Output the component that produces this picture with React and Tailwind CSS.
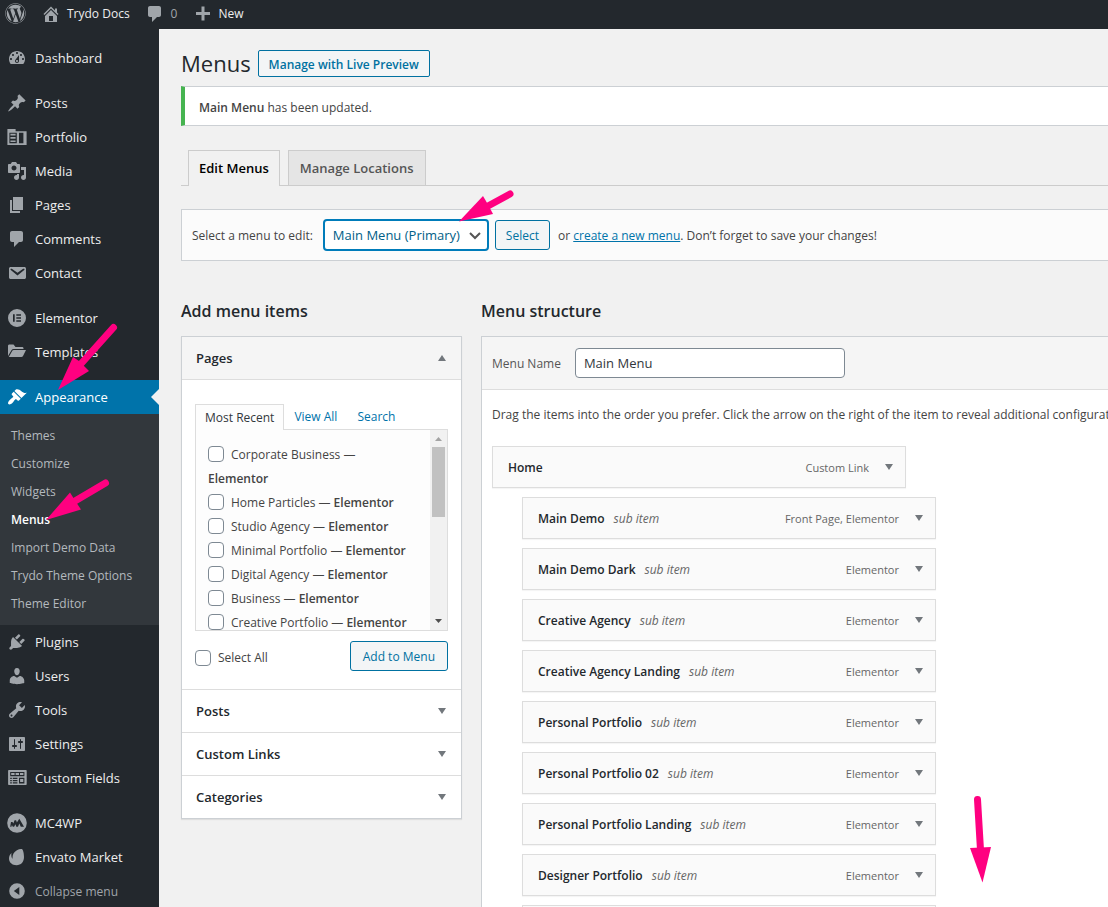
import React from "react";
import { FaWordpress } from "react-icons/fa";

const ICONS = {
  dashboard:
    "M3.76 16h12.48c1.1-1.37 1.76-3.11 1.76-5 0-4.42-3.58-8-8-8s-8 3.58-8 8c0 1.89.66 3.63 1.76 5zM10 4c.55 0 1 .45 1 1s-.45 1-1 1-1-.45-1-1 .45-1 1-1zM6 6c.55 0 1 .45 1 1s-.45 1-1 1-1-.45-1-1 .45-1 1-1zm8 0c.55 0 1 .45 1 1s-.45 1-1 1-1-.45-1-1 .45-1 1-1zm-5.37 5.55L12 7v6c0 1.1-.9 2-2 2s-2-.9-2-2c0-.57.24-1.08.63-1.45zM4 10c.55 0 1 .45 1 1s-.45 1-1 1-1-.45-1-1 .45-1 1-1zm12 0c.55 0 1 .45 1 1s-.45 1-1 1-1-.45-1-1 .45-1 1-1zm-5 3c0-.55-.45-1-1-1s-1 .45-1 1 .45 1 1 1 1-.45 1-1z",
  pin: "M10.44 3.02l1.82-1.82 6.36 6.35-1.83 1.82c-1.05-.68-2.48-.57-3.41.36l-.75.75c-.92.93-1.04 2.35-.35 3.41l-1.83 1.82-2.41-2.41-2.8 2.79c-.42.42-3.38 2.71-3.8 2.29s1.86-3.39 2.28-3.81l2.79-2.79L4.1 9.36l1.83-1.82c1.05.69 2.48.57 3.4-.36l.75-.75c.93-.92 1.05-2.35.36-3.41z",
  portfolio:
    "M.4 2H8.600v2.200h11v13.800H.4V2zM2.400 5.800v10.400H9.800V5.800H2.400zM12 5.800v10.400h4.400V5.800H12zM3.400 6.800h5.200v1.700H3.400V6.800zm0 3.300h5.200v1.700H3.400v-1.700zm0 3.300h5.200v1.700H3.400v-1.700z",
  media:
    "M13 11V4c0-.55-.45-1-1-1h-1.67L9 1H5L3.67 3H2c-.55 0-1 .45-1 1v7c0 .55.45 1 1 1h10c.55 0 1-.45 1-1zM7 4.5c1.38 0 2.5 1.12 2.5 2.5S8.38 9.5 7 9.5 4.5 8.38 4.5 7 5.62 4.5 7 4.5zM14 6h5v10.5c0 1.38-1.12 2.5-2.5 2.5S14 17.88 14 16.5s1.12-2.5 2.5-2.5c.17 0 .34.02.5.05V9h-3V6zm-4 8.05V13h2v3.5c0 1.38-1.12 2.5-2.5 2.5S7 17.88 7 16.5 8.12 14 9.5 14c.17 0 .34.02.5.05z",
  page: "M6 15V2h10v13H6zm-1 1h8v2H3V5h2v11z",
  comment:
    "M5 2h9c1.1 0 2 .9 2 2v7c0 1.1-.9 2-2 2h-2l-5 5v-5H5c-1.1 0-2-.9-2-2V4c0-1.1.9-2 2-2z",
  email:
    "M3.87 4h13.25C18.37 4 19 4.59 19 5.79v8.42c0 1.19-.63 1.79-1.88 1.79H3.87c-1.25 0-1.88-.6-1.88-1.79V5.79c0-1.2.63-1.79 1.88-1.79zm6.62 8.6l6.74-5.53c.24-.2.43-.66.13-1.07-.29-.41-.82-.42-1.17-.17l-5.7 3.86L4.8 5.83c-.35-.25-.88-.24-1.17.17-.3.41-.11.87.13 1.07z",
  elementor:
    "M10 1a9 9 0 1 0 0 18 9 9 0 0 0 0-18zM6 6.200h1.700v7.600H6V6.200zm3.300 0H14v1.600H9.300V6.200zm0 3H14v1.600H9.300V9.200zm0 3H14v1.600H9.300v-1.600z",
  folder:
    "M1 4c0-1 .6-1.500 1.500-1.500h4L8.500 5H15c1 0 1.500.5 1.500 1.500V7H6.500c-.8 0-1.500.4-1.900 1.100L1 14V4zm5.800 4H19l-3 6c-.3.700-.9 1-1.600 1H1.800l3.500-6.200c.3-.5.900-.8 1.500-.8z",
  brush:
    "M14.48 11.06L7.41 3.99l1.5-1.5c.5-.56 2.3-.47 3.51.32 1.21.8 1.43 1.28 2.91 2.1 1.18.64 2.45 1.26 4.45.85zm-.71.71L6.7 4.7 4.93 6.47c-.39.39-.39 1.02 0 1.41l1.06 1.06c.39.39.39 1.03 0 1.42-.6.6-1.43 1.11-2.21 1.69-.35.26-.7.53-1.01.84C1.43 14.23.4 16.08 1.4 17.07c.99 1 2.84-.03 4.18-1.36.31-.31.58-.66.85-1.02.57-.78 1.08-1.61 1.69-2.21.39-.39 1.02-.39 1.41 0l1.06 1.06c.39.39 1.02.39 1.41 0z",
  plugin:
    "M13.11 4.36L9.87 7.6 8 5.73l3.24-3.24c.35-.34 1.05-.2 1.56.32.52.51.66 1.21.31 1.55zm-8 1.77l.91-1.12 9.01 9.01-1.19.84c-.71.71-2.63 1.16-3.82 1.16H6.14L4.9 17.26c-.59.59-1.54.59-2.12 0-.59-.58-.59-1.53 0-2.12l1.24-1.24v-3.88c0-1.13.4-3.19 1.09-3.89zm7.26 3.97l3.24-3.24c.34-.35 1.04-.21 1.55.31.52.51.66 1.21.31 1.55l-3.24 3.25z",
  user: "M10 9.25c-2.27 0-2.73-3.44-2.73-3.44C7 4.02 7.82 2 9.97 2c2.16 0 2.98 2.02 2.71 3.81 0 0-.41 3.44-2.68 3.44zm0 2.57L12.72 10c2.39 0 4.52 2.33 4.52 4.53v2.49s-3.65 1.13-7.24 1.13c-3.65 0-7.24-1.13-7.24-1.13v-2.49c0-2.25 1.94-4.48 4.47-4.48z",
  wrench:
    "M16.68 9.77c-1.34 1.34-3.3 1.67-4.95.99l-5.41 6.52c-.99.99-2.59.99-3.58 0s-.99-2.59 0-3.57l6.52-5.42c-.68-1.65-.35-3.61.99-4.95 1.28-1.28 3.12-1.62 4.72-1.06l-2.89 2.89 2.82 2.82 2.86-2.87c.53 1.58.18 3.39-1.08 4.65zM3.81 16.21c.4.39 1.04.39 1.43 0 .4-.4.4-1.04 0-1.43-.39-.4-1.03-.4-1.43 0-.39.39-.39 1.03 0 1.43z",
  settings:
    "M18 16V4c0-.55-.45-1-1-1H3c-.55 0-1 .45-1 1v12c0 .55.45 1 1 1h14c.55 0 1-.45 1-1zM8 11h1c.55 0 1 .45 1 1s-.45 1-1 1H8v1.5c0 .28-.22.5-.5.5s-.5-.22-.5-.5V13H6c-.55 0-1-.45-1-1s.45-1 1-1h1V5.5c0-.28.22-.5.5-.5s.5.22.5.5V11zm5-2h-1c-.55 0-1-.45-1-1s.45-1 1-1h1V5.5c0-.28.22-.5.5-.5s.5.22.5.5V7h1c.55 0 1 .45 1 1s-.45 1-1 1h-1v5.5c0 .28-.22.5-.5.5s-.5-.22-.5-.5V9z",
  fields:
    "M1.800 2h17.200c.4 0 .7.300.7.700v13.600c0 .4-.3.700-.7.700H1.800c-.4 0-.7-.3-.7-.7V2.700c0-.4.300-.7.700-.7zM3.200 4v4.300h14.200V4H3.200zm1 1.100h3.400v2H4.200v-2zm4.400 0H12v2H8.600v-2zm4.400 0h3.400v2H13v-2zM3.200 9.700v1.200h1.600V9.700H3.200zm2.600 0v1.200h4.600V9.700H5.800zM3.200 12v1.200h1.600V12H3.200zm2.600 0v1.200h4.600V12H5.800zm-2.600 2.300v1.200h1.600v-1.200H3.200zm2.600 0v1.200h4.600v-1.200H5.800zM12 9.700v5.800h5.400V9.700H12zm1.100 1.200h3.200v3h-3.200v-3z",
  mc4wp:
    "M10 .2a9.800 9.800 0 1 0 0 19.600A9.800 9.800 0 0 0 10 .2zM3.200 13.800L4 9h1.500l.8 1.400L7.600 7.200h1.500l.8 2.300L12.300 5.800l4.700 8h-3.200l-1.500-3.200-1.300 3.200H9.300l-.9-2.600-1.300 2.600H5.800l-.9-1.800-.5 1.800H3.200z",
  envato:
    "M14.800 2c-2.400-.5-6.600 1.500-8.300 4.500-1.300 2.300-.9 5.500-.9 5.500-1.300-1.400-1.500-4-1.100-6-1.700 1.400-2.500 3.600-2.500 5.500C2 15.500 5.300 18.200 9.500 18.200c4.600 0 7.500-3.300 7.500-8.200 0-3.300-.9-7.600-2.200-8z",
  collapse:
    "M10 2.200a7.800 7.800 0 1 0 0 15.600 7.800 7.800 0 0 0 0-15.600zM12.300 6v8L6.800 10l5.500-4z",
  home: "M16 8.5l1.53 1.53-1.06 1.06L10 4.6l-6.47 6.49-1.06-1.06L10 2.5l4 4v-2h2v4zm-6-2.46l6 5.99V18H4v-5.97zM12 17v-5H8v5h4z",
  plus: "M17 8v3h-5.500v5.500h-3V11H3V8h5.500V2.500h3V8H17z",
};

function Icon({ name, className = "" }) {
  return (
    <svg viewBox="0 0 20 20" aria-hidden="true" className={"size-5 shrink-0 fill-current " + className}>
      <path fillRule="evenodd" d={ICONS[name]} />
    </svg>
  );
}

function Caret({ up = false }) {
  return (
    <svg viewBox="0 0 8 6" aria-hidden="true" className="h-[6px] w-[8px] shrink-0 fill-[#72777c]">
      <path d={up ? "M4 0l4 6H0z" : "M0 0h8L4 6z"} />
    </svg>
  );
}

const MENU = [
  [["Dashboard", "dashboard"]],
  [
    ["Posts", "pin"],
    ["Portfolio", "portfolio"],
    ["Media", "media"],
    ["Pages", "page"],
    ["Comments", "comment"],
    ["Contact", "email"],
  ],
  [
    ["Elementor", "elementor"],
    ["Templates", "folder"],
  ],
];

const AFTER = [
  [
    ["Plugins", "plugin"],
    ["Users", "user"],
    ["Tools", "wrench"],
    ["Settings", "settings"],
    ["Custom Fields", "fields"],
  ],
  [
    ["MC4WP", "mc4wp"],
    ["Envato Market", "envato"],
  ],
];

const SUBMENU = [
  "Themes",
  "Customize",
  "Widgets",
  "Menus",
  "Import Demo Data",
  "Trydo Theme Options",
  "Theme Editor",
];

const PAGES = [
  "Corporate Business",
  "Home Particles",
  "Studio Agency",
  "Minimal Portfolio",
  "Digital Agency",
  "Business",
  "Creative Portfolio",
];

const ITEMS = [
  ["Main Demo", "Front Page, Elementor"],
  ["Main Demo Dark", "Elementor"],
  ["Creative Agency", "Elementor"],
  ["Creative Agency Landing", "Elementor"],
  ["Personal Portfolio", "Elementor"],
  ["Personal Portfolio 02", "Elementor"],
  ["Personal Portfolio Landing", "Elementor"],
  ["Designer Portfolio", "Elementor"],
];

function MenuGroup({ items }) {
  return (
    <ul>
      {items.map(([label, icon]) => (
        <li key={label}>
          <a href="#" className="flex h-[34px] items-center gap-2 pl-[7px] text-[13px] text-[#eeeeee]">
            <Icon name={icon} className="text-[#a0a5aa]" />
            <span className="pt-[2px]">{label}</span>
          </a>
        </li>
      ))}
    </ul>
  );
}

function Sidebar() {
  return (
    <nav aria-label="Main menu" className="w-[159px] shrink-0 bg-[#23282d] pt-3">
      <div className="flex flex-col gap-[11px]">
        {MENU.map((group) => (
          <MenuGroup key={group[0][0]} items={group} />
        ))}
        <div>
          <a
            href="#"
            aria-current="true"
            className="relative flex h-[34px] items-center gap-2 bg-[#0073aa] pl-[7px] text-[13px] text-white"
          >
            <Icon name="brush" />
            <span className="pt-[2px]">Appearance</span>
            <span className="absolute top-[9px] right-0 border-y-8 border-r-8 border-y-transparent border-r-[#f1f1f1]" />
          </a>
          <ul className="bg-[#32373c] pt-2 pb-[7px]">
            {SUBMENU.map((label) => (
              <li key={label}>
                <a
                  href="#"
                  className={
                    "flex h-7 items-center pl-[11px] text-[12px] whitespace-nowrap " +
                    (label === "Menus" ? "font-semibold text-white" : "text-[#b4b9be]")
                  }
                >
                  {label}
                </a>
              </li>
            ))}
          </ul>
          <MenuGroup items={AFTER[0]} />
        </div>
        <div>
          <MenuGroup items={AFTER[1]} />
          <button type="button" className="flex h-[34px] items-center gap-2 pl-[7px] text-[12px] text-[#a0a5aa]">
            <Icon name="collapse" />
            <span className="pt-[2px]">Collapse menu</span>
          </button>
        </div>
      </div>
    </nav>
  );
}

function TopBar() {
  return (
    <header className="flex h-[29px] shrink-0 items-center bg-[#23282d] pl-[5px] pb-[2px] text-[12px] text-[#eeeeee]">
      <a href="#" aria-label="About WordPress" className="mr-[15px]">
        <FaWordpress className="size-[21px] text-[#a0a5aa]" />
      </a>
      <a href="#" className="mr-[15px] flex items-center gap-[6px]">
        <Icon name="home" className="text-[#a0a5aa]" />
        Trydo Docs
      </a>
      <a href="#" className="mr-4 flex items-center gap-[6px] text-[#a0a5aa]">
        <Icon name="comment" />0
      </a>
      <a href="#" className="flex items-center gap-[5px]">
        <Icon name="plus" className="text-[#a0a5aa]" />
        New
      </a>
    </header>
  );
}

const box =
  "size-4 shrink-0 appearance-none rounded-[4px] border border-[#7e8993] bg-white align-middle";
const blueButton =
  "rounded-[3px] border border-[#0071a1] bg-[#f3f5f6] pt-px text-[12px] text-[#0071a1]";

function AddItems() {
  return (
    <section className="w-[281px] shrink-0">
      <h2 className="text-[16px] leading-6 font-semibold text-[#23282d]">Add menu items</h2>
      <div className="mt-[13px] border border-[#ccd0d4] bg-white shadow-[0_1px_1px_rgba(0,0,0,0.08)]">
        <h3>
          <button
            type="button"
            aria-expanded="true"
            className="flex h-[43px] w-full items-center justify-between border-b border-[#dddddd] bg-[#f5f5f5] pr-[15px] pl-[14px] text-[13px] font-semibold text-[#23282d]"
          >
            <span className="pt-[2px]">Pages</span>
            <Caret up />
          </button>
        </h3>
        <div className="px-[13px] pt-6 pb-[18px]">
          <div role="tablist" className="flex h-[25px] text-[12px] leading-6">
            <button
              type="button"
              role="tab"
              aria-selected="true"
              className="z-10 -mb-px border border-b-0 border-[#dddddd] bg-[#fdfdfd] px-[9px] text-[#32373c]"
            >
              Most Recent
            </button>
            <button type="button" role="tab" className="px-[10px] pt-px text-[#0073aa]">
              View All
            </button>
            <button type="button" role="tab" className="px-[10px] pt-px text-[#0073aa]">
              Search
            </button>
          </div>
          <div className="flex h-[202px] overflow-hidden border border-[#dddddd] bg-[#fdfdfd]">
            <ul className="min-w-0 flex-1 pt-[13px] pl-3 text-[12px] leading-6 text-[#444444]">
              {PAGES.map((name, i) => (
                <li key={name}>
                  <label>
                    <input type="checkbox" className={box + " mr-[7px] -mt-1"} />
                    {name} — {i === 0 && <br />}
                    <span className="font-semibold">Elementor</span>
                  </label>
                </li>
              ))}
            </ul>
            <div
              aria-hidden="true"
              className="flex w-[17px] shrink-0 flex-col items-center justify-between bg-[#f1f1f1]"
            >
              <div className="flex flex-col items-center">
                <svg viewBox="0 0 17 17" className="size-[17px]">
                  <path d="M5 11h7L8.500 7z" fill="#a3a3a3" />
                </svg>
                <div className="h-[70px] w-[13px] bg-[#c1c1c1]" />
              </div>
              <svg viewBox="0 0 17 17" className="size-[17px]">
                <path d="M5 6h7L8.500 10z" fill="#505050" />
              </svg>
            </div>
          </div>
          <div className="mt-[10px] flex items-start justify-between">
            <label className="flex items-center gap-[7px] pt-[7px] text-[12px] leading-5 text-[#444444]">
              <input type="checkbox" className={box} />
              Select All
            </label>
            <button type="button" className={blueButton + " h-[30px] px-3"}>
              Add to Menu
            </button>
          </div>
        </div>
        {["Posts", "Custom Links", "Categories"].map((label) => (
          <h3 key={label}>
            <button
              type="button"
              aria-expanded="false"
              className="flex h-[43px] w-full items-center justify-between border-t border-[#dddddd] pr-[15px] pl-[14px] text-[13px] font-semibold text-[#23282d]"
            >
              <span className="pt-[2px]">{label}</span>
              <Caret />
            </button>
          </h3>
        ))}
      </div>
    </section>
  );
}

function MenuItem({ title, type, sub }) {
  return (
    <li
      className={
        "flex h-[42px] w-[414px] items-center border border-[#dddddd] bg-[#fafafa] pr-3 pl-[15px] shadow-[0_1px_1px_rgba(0,0,0,0.04)] " +
        (sub ? "ml-[30px]" : "")
      }
    >
      <span className="pt-[2px] text-[12px] font-semibold text-[#23282d]">{title}</span>
      {sub && <span className="ml-[9px] pt-[2px] text-[12px] text-[#666666] italic">sub item</span>}
      <span className="ml-auto pt-[2px] text-[11px] text-[#666666]">{type}</span>
      <button type="button" aria-label={"Edit " + title} className="ml-4">
        <Caret />
      </button>
    </li>
  );
}

function Structure() {
  return (
    <section className="min-w-0 flex-1">
      <h2 className="text-[16px] leading-6 font-semibold text-[#23282d]">Menu structure</h2>
      <div className="mt-[13px] border border-r-0 border-[#ccd0d4] bg-white">
        <div className="flex h-[53px] items-center gap-[14px] border-b border-[#dddddd] bg-[#f5f5f5] pl-[10px]">
          <label htmlFor="menu-name" className="pt-[2px] text-[12px] whitespace-nowrap text-[#555555]">
            Menu Name
          </label>
          <input
            id="menu-name"
            type="text"
            defaultValue="Main Menu"
            className="h-[30px] w-[270px] rounded-[4px] border border-[#7e8993] bg-white px-2 text-[13px] text-[#32373c]"
          />
        </div>
        <div className="pt-[15px] pl-[10px]">
          <p className="overflow-hidden text-[12px] leading-5 whitespace-nowrap text-[#444444]">
            Drag the items into the order you prefer. Click the arrow on the right of the item to reveal additional
            configuration options.
          </p>
          <ul className="mt-[21px] flex flex-col gap-[9px]">
            <MenuItem title="Home" type="Custom Link" />
            {ITEMS.map(([title, type]) => (
              <MenuItem key={title} title={title} type={type} sub />
            ))}
            <li className="ml-[30px] h-[42px] w-[414px] border border-[#dddddd] bg-[#fafafa]" />
          </ul>
        </div>
      </div>
    </section>
  );
}

function Arrows() {
  return (
    <svg
      aria-hidden="true"
      viewBox="0 0 1108 907"
      className="pointer-events-none absolute top-0 left-0 h-[907px] w-[1108px] fill-[#ff0080] stroke-[#ff0080]"
    >
      <g strokeLinecap="round" strokeWidth="7">
        <path d="M113.500 327.500L79 366" />
        <path d="M105.500 483L75 501" />
        <path d="M510 194L488 206" />
        <path d="M977.500 799.500L980.500 850" />
      </g>
      <g stroke="none">
        <path d="M58 390L73 357l6 4 5 5 5 5z" />
        <path d="M46 520L70 492.500l5 8 6 9z" />
        <path d="M459 221.500L483 196l5 8.500 5 9.500z" />
        <path d="M982.500 882.500L970 848l21-1z" />
      </g>
    </svg>
  );
}

export default function App() {
  return (
    <div className="relative flex h-screen flex-col overflow-hidden bg-[#f1f1f1] font-['Open_Sans','Noto_Sans',sans-serif]">
      <TopBar />
      <div className="flex min-h-0 flex-1">
        <Sidebar />
        <main className="flex min-w-0 flex-1 flex-col pt-5 pl-[22px]">
          <div className="flex items-center gap-[7px]">
            <h1 className="text-[22px] leading-7 text-[#23282d]">Menus</h1>
            <a
              href="#"
              className="flex h-[27px] items-center rounded-[2px] border border-[#0071a1] bg-[#f3f5f6] px-[10px] pt-[3px] text-[12px] font-semibold text-[#0071a1]"
            >
              Manage with Live Preview
            </a>
          </div>
          <div
            role="status"
            className="mt-[9px] flex h-10 shrink-0 items-center border-y border-l-4 border-y-[#ccd0d4] border-l-[#46b450] bg-white pt-[3px] pl-[14px] text-[12px] text-[#444444]"
          >
            <p>
              <strong className="font-semibold">Main Menu</strong> has been updated.
            </p>
          </div>
          <nav
            aria-label="Menu screens"
            className="mt-6 flex shrink-0 gap-2 border-b border-[#cccccc] pl-[7px] text-[13px] font-semibold"
          >
            <a
              href="#"
              className="-mb-px flex h-9 items-center border border-b-0 border-[#cccccc] bg-[#f1f1f1] px-[10px] text-black"
            >
              Edit Menus
            </a>
            <a
              href="#"
              className="flex h-[35px] items-center border border-b-0 border-[#cccccc] bg-[#e5e5e5] px-[11px] pt-px text-[#555555]"
            >
              Manage Locations
            </a>
          </nav>
          <form className="mt-[23px] flex h-[52px] shrink-0 items-center border border-r-0 border-[#ccd0d4] bg-[#fbfbfb] pl-[10px] text-[12px] whitespace-nowrap text-[#444444]">
            <label htmlFor="menu-select" className="pt-[2px]">
              Select a menu to edit:
            </label>
            <span className="relative ml-[10px]">
              <select
                id="menu-select"
                className="h-8 w-[166px] appearance-none rounded-[4px] border-2 border-[#007cba] bg-white pt-px pl-2 text-[13px] text-[#016087]"
              >
                <option>Main Menu (Primary)</option>
              </select>
              <svg
                aria-hidden="true"
                viewBox="0 0 12 8"
                className="pointer-events-none absolute top-[13px] right-2 h-2 w-3 fill-none stroke-[#555555] stroke-2"
              >
                <path d="M1 1l5 5 5-5" />
              </svg>
            </span>
            <button type="button" className={blueButton + " ml-[6px] h-[30px] px-[10px]"}>
              Select
            </button>
            <span className="ml-2 pt-[2px]">
              or{" "}
              <a href="#" className="text-[#0073aa] underline">
                create a new menu
              </a>
              . Don’t forget to save your changes!
            </span>
          </form>
          <div className="mt-[38px] flex gap-[19px]">
            <AddItems />
            <Structure />
          </div>
        </main>
      </div>
      <Arrows />
    </div>
  );
}
